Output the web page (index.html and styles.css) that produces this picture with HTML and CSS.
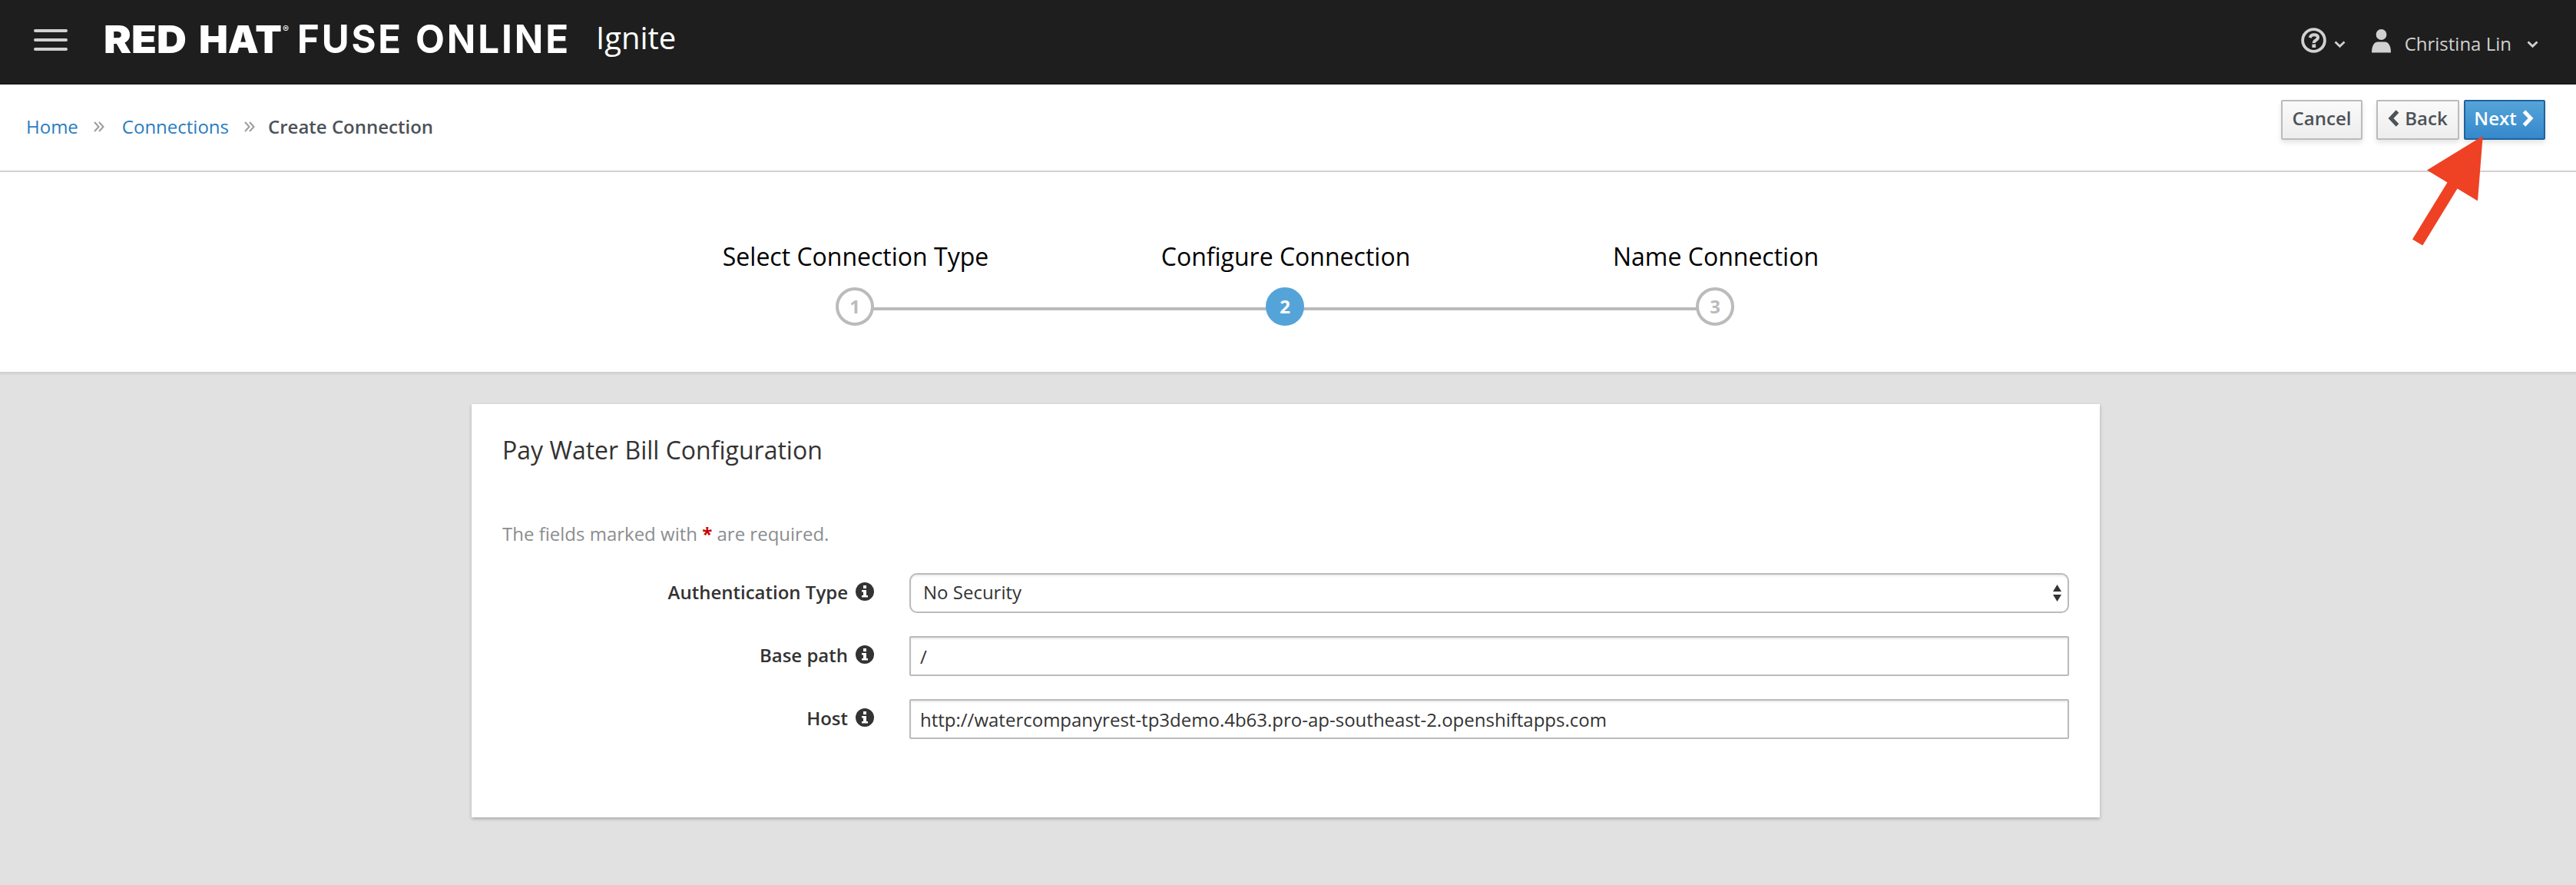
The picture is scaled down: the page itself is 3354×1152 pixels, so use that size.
FILE: index.html
```html
<!DOCTYPE html>
<html lang="en">
<head>
<meta charset="utf-8">
<title>Create Connection</title>
<link rel="stylesheet" href="styles.css">
</head>
<body>
<svg class="sprite" width="0" height="0">
  <symbol id="chevron" viewBox="0 0 15 10"><path d="M1.5 1.5 7.5 7.3 13.5 1.5" fill="none" stroke="currentColor" stroke-width="2.8"/></symbol>
  <symbol id="angles" viewBox="0 0 14 14"><path d="M1 1 6.500 7 1 13M7 1l5.500 6L7 13" fill="none" stroke="currentColor" stroke-width="2"/></symbol>
  <symbol id="info" viewBox="0 0 24 24"><path fill="currentColor" fill-rule="evenodd" d="M12 0a12 12 0 1 1 0 24 12 12 0 0 1 0-24ZM10 4v4h4V4ZM8 10v2.5h2V17H8v2.5h8V17h-2v-7Z"/></symbol>
</svg>
<header class="masthead">
  <button class="menu" aria-label="Menu"><span></span><span></span><span></span></button>
  <svg class="logo" width="602" height="50" viewBox="0 0 602 50">
    <text class="logo-bold" x="-3" y="42" textLength="108" lengthAdjust="spacingAndGlyphs">RED</text>
    <text class="logo-bold" x="121" y="42" textLength="108" lengthAdjust="spacingAndGlyphs">HAT</text>
    <text class="logo-reg" x="230" y="15">®</text>
    <text class="logo-light" x="249" y="42" textLength="138" lengthAdjust="spacingAndGlyphs">FUSE</text>
    <text class="logo-light" x="403" y="42" textLength="202" lengthAdjust="spacingAndGlyphs">ONLINE</text>
  </svg>
  <span class="product">Ignite</span>
  <div class="tools">
    <svg class="help" width="33" height="33" viewBox="0 0 33 33"><circle cx="16.5" cy="16.5" r="14.4" fill="none" stroke="currentColor" stroke-width="3.8"/><path d="M11.6 13.2C12.4 10.6 14.2 9.3 17 9.3c3.200 0 5 1.500 5 3.500 0 3.700-5.300 3.100-5.300 7.200" fill="none" stroke="currentColor" stroke-width="4"/><path d="M14.400 21.500h4.800v4.500h-4.800z" fill="currentColor"/></svg>
    <svg class="caret" width="15" height="10"><use href="#chevron"/></svg>
    <svg class="user" width="25" height="31" viewBox="0 0 25 31"><circle cx="12.500" cy="7" r="6.900" fill="currentColor"/><path d="M0 30.500C0 21 3.500 16.500 8 16.500h9c4.500 0 8 4.500 8 14Z" fill="currentColor"/></svg>
    <span class="username">Christina Lin</span>
    <svg class="caret last" width="15" height="10"><use href="#chevron"/></svg>
  </div>
</header>
<nav class="toolbar">
  <ol class="crumbs">
    <li><a>Home</a></li>
    <li><svg width="14" height="14"><use href="#angles"/></svg><a>Connections</a></li>
    <li class="current"><svg width="14" height="14"><use href="#angles"/></svg>Create Connection</li>
  </ol>
  <div class="actions">
    <button class="btn cancel">Cancel</button>
    <button class="btn back"><svg width="15" height="22" viewBox="0 0 15 22"><path d="M12.500 2 4 11l8.500 9" fill="none" stroke="currentColor" stroke-width="5"/></svg>Back</button>
    <button class="btn next">Next<svg width="15" height="22" viewBox="0 0 15 22"><path d="M2.500 2 11 11l-8.500 9" fill="none" stroke="currentColor" stroke-width="5"/></svg></button>
    <svg class="pointer" width="94" height="146" viewBox="0 0 94 146"><path d="M91.700 2 85 86.500 58.500 70.500 13.300 144.500 0 136.500 45.500 62.500 19 46.500Z" fill="#ef4124"/></svg>
  </div>
</nav>
<section class="wizard">
  <div class="step"><span class="step-title">Select Connection Type</span><span class="num">1</span></div>
  <div class="step active"><span class="step-title">Configure Connection</span><span class="num">2</span></div>
  <div class="step"><span class="step-title">Name Connection</span><span class="num">3</span></div>
</section>
<main class="content">
  <form class="card">
    <h2>Pay Water Bill Configuration</h2>
    <p>The fields marked with <b>*</b> are required.</p>
    <div class="field"><label>Authentication Type</label><svg class="info" width="24" height="24"><use href="#info"/></svg>
      <div class="control select"><span>No Security</span><svg width="12" height="22" viewBox="0 0 12 22"><path d="M0 9 5.500 0 11 9ZM0 13h11l-5.500 9Z" fill="#333"/></svg></div></div>
    <div class="field"><label>Base path</label><svg class="info" width="24" height="24"><use href="#info"/></svg>
      <div class="control">/</div></div>
    <div class="field"><label>Host</label><svg class="info" width="24" height="24"><use href="#info"/></svg>
      <div class="control">http://watercompanyrest-tp3demo.4b63.pro-ap-southeast-2.openshiftapps.com</div></div>
  </form>
</main>
</body>
</html>
```
FILE: styles.css
```css
* { box-sizing: border-box; }
body {
  margin: 0;
  height: 1152px;
  display: flex;
  flex-direction: column;
  background: #e1e1e1;
  color: #333;
  font: 24px/40px "Open Sans", sans-serif;
}
svg { display: block; flex: none; }
.sprite { position: absolute; }
button { font: inherit; }
.masthead {
  height: 110px;
  display: flex;
  align-items: flex-start;
  padding: 0 49px 0 44px;
  background: #1e1e1e;
  border-bottom: 1px solid #111;
  color: #d1d1d1;
}
.menu {
  width: 44px;
  margin-top: 38px;
  padding: 0;
  border: 0;
  background: none;
  display: flex;
  flex-direction: column;
  gap: 8px;
}
.menu span { width: 44px; height: 4px; border-radius: 2px; background: #d1d1d1; }
.logo { margin: 27px 0 0 50px; overflow: visible; }
.logo text { fill: #fff; font-family: Inter, sans-serif; }
.logo .logo-bold { font-size: 50px; font-weight: 900; }
.logo .logo-reg { font-size: 12px; }
.logo .logo-light { font-size: 51px; font-weight: 700; letter-spacing: 3px; }
.product { margin: 19px 0 0 36px; color: #fff; font-size: 40px; line-height: 60px; }
.tools { margin-left: auto; display: flex; align-items: flex-start; }
.help { margin-top: 36px; }
.caret { margin: 53px 0 0 10px; }
.user { margin: 38px 0 0 34px; }
.username { margin: 37px 0 0 18px; }
.caret.last { margin-left: 20px; }
.toolbar {
  height: 114px;
  display: flex;
  justify-content: space-between;
  align-items: flex-start;
  padding: 20px 40px 0 34px;
  background: #fff;
  border-bottom: 2px solid #d1d1d1;
}
.crumbs { display: flex; margin: 15px 0 0; padding: 0; list-style: none; }
.crumbs li { display: flex; }
.crumbs a { color: #2a7cc0; }
.crumbs .current { color: #4d5258; font-weight: 600; }
.crumbs svg { margin: 13px 23px 0 20px; color: #9c9c9c; }
.crumbs .current svg { margin-right: 17px; }
.actions { display: flex; position: relative; }
.btn {
  height: 52px;
  padding: 0 0 4px;
  display: flex;
  align-items: center;
  justify-content: center;
  border: 2px solid #bbb;
  border-radius: 2px;
  background: linear-gradient(#fafafa, #ededed);
  box-shadow: 0 4px 6px rgba(3, 3, 3, .1);
  color: #4d5258;
  font-weight: 600;
  line-height: 40px;
}
.cancel { width: 106px; margin-right: 18px; }
.back { width: 108px; margin-right: 6px; gap: 7px; }
.next {
  width: 106px;
  padding-right: 2px;
  gap: 7px;
  border-color: #21629a;
  background: linear-gradient(#55a4d9, #3588cb);
  color: #fff;
}
.pointer { position: absolute; left: 171px; top: 45px; }
.wizard {
  height: 262px;
  display: flex;
  justify-content: center;
  padding: 90px 8px 0 0;
  background: #fff;
  border-bottom: 2px solid #d1d1d1;
  box-shadow: 0 2px 0 #d9d9d9;
}
.step {
  width: 560px;
  height: 110px;
  display: flex;
  flex-direction: column;
  align-items: center;
  background: linear-gradient(#bbb, #bbb) 0 86px / 100% 4px no-repeat;
}
.step:first-child { background-position: 280px 86px; }
.step:last-child { background-position: -280px 86px; }
.step-title { height: 60px; padding-left: 2px; color: #000; font-size: 32px; line-height: 40px; }
.num {
  width: 50px;
  height: 50px;
  border: 4px solid #bbb;
  border-radius: 50%;
  background: #fff;
  color: #bbb;
  font-weight: 700;
  line-height: 42px;
  text-align: center;
}
.active .num { border-color: #55a4d9; background: #55a4d9; color: #fff; }
.content { padding: 40px 0 0 614px; }
.card {
  width: 2120px;
  height: 538px;
  padding: 39px 40px 0;
  background: #fff;
  box-shadow: 0 2px 4px rgba(3, 3, 3, .25);
}
h2 { margin: 0; font-size: 32px; font-weight: 400; line-height: 42px; }
p { margin: 68px 0 28px; line-height: 40px; height: 43px; color: #8b8d8f; }
p b { color: #c00; }
.field { height: 82px; display: flex; align-items: flex-start; }
label { width: 450px; text-align: right; font-weight: 600; line-height: 50px; }
.info { margin: 12px 46px 0 10px; }
.control {
  width: 1510px;
  height: 52px;
  padding: 5px 12px 0;
  border: 2px solid #bbb;
  border-radius: 2px;
  background: #fff;
  box-shadow: inset 0 2px 2px rgba(3, 3, 3, .075);
  color: #333;
}
.select { display: flex; justify-content: space-between; padding: 3px 7px 0 16px; border-radius: 10px; }
.select svg { margin-top: 10px; }
```
